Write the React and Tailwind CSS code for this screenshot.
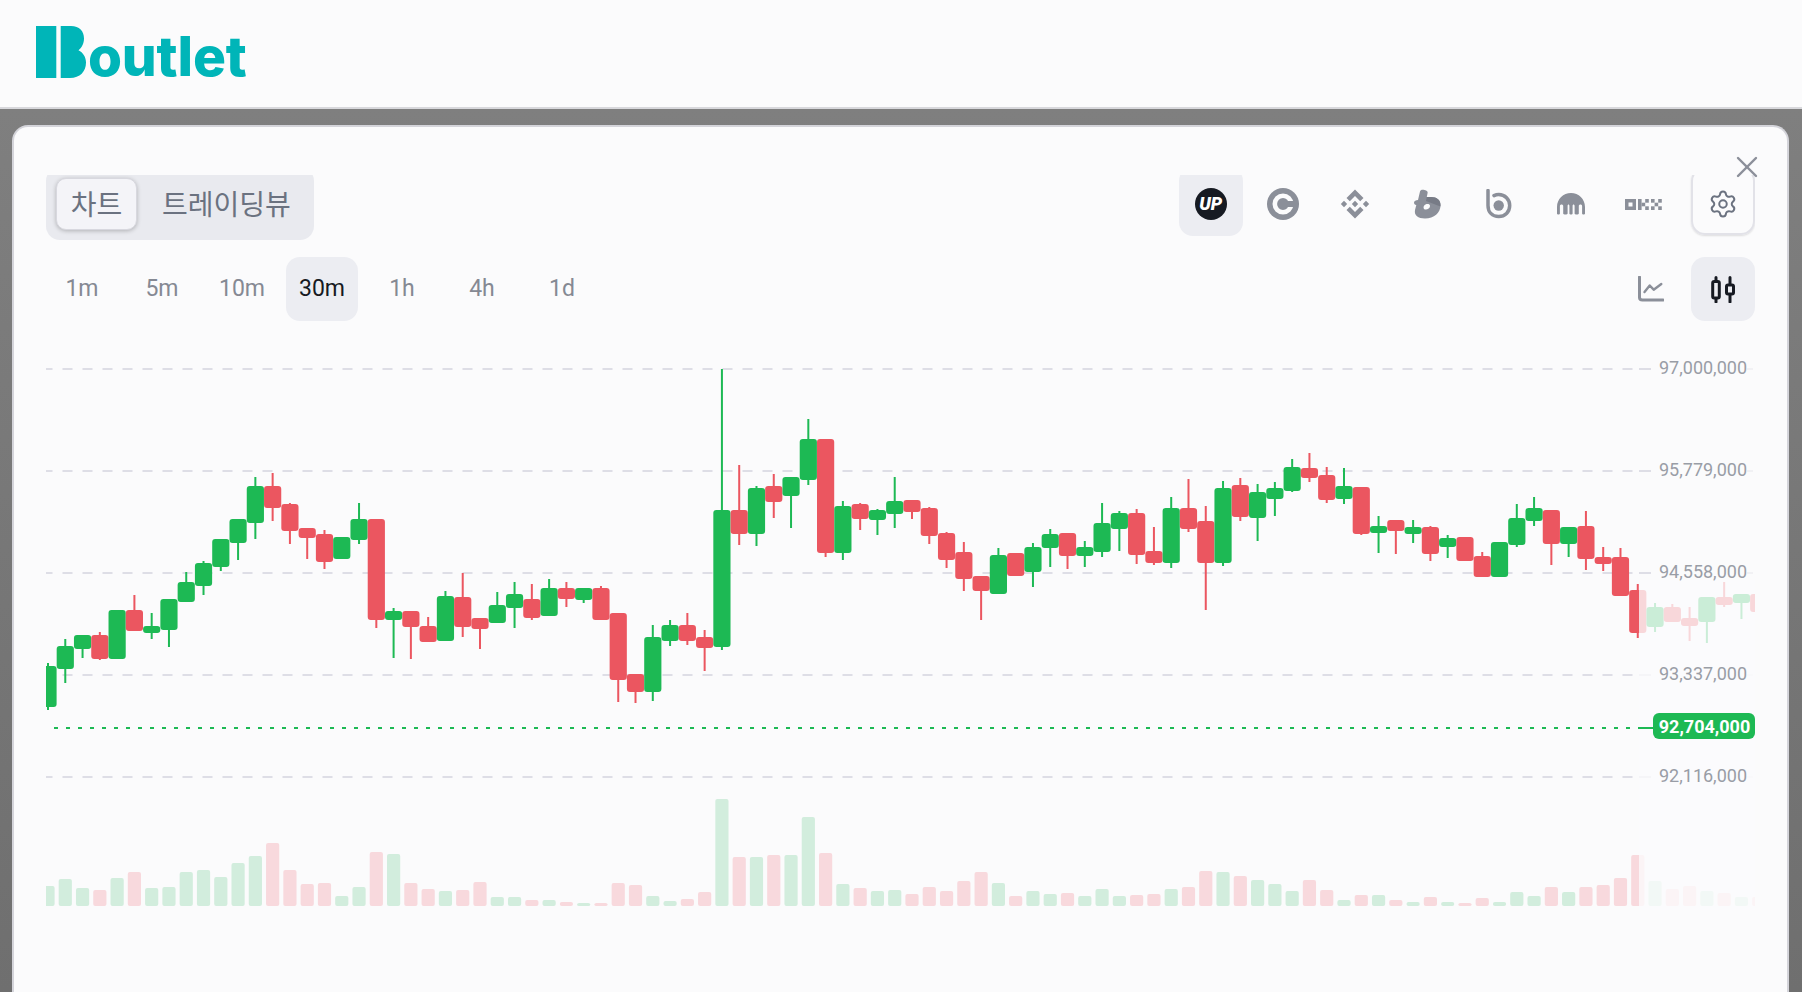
import { Settings, X } from 'lucide-react';

const UP = '#1db954';
const DOWN = '#eb5660';

const prices = [
  ['97,000,000', 369],
  ['95,779,000', 471],
  ['94,558,000', 573],
  ['93,337,000', 675],
  ['92,116,000', 777],
];

// type, wick top, body top, body bottom, wick bottom (page y)
const candles = [
  ['g', 663, 666, 707, 710], ['g', 639, 646, 669, 683], ['g', 635, 635, 649, 658], ['r', 632, 635, 659, 660],
  ['g', 610, 610, 659, 659], ['r', 595, 610, 631, 631], ['g', 613, 626, 633, 639], ['g', 599, 599, 630, 647],
  ['g', 572, 582, 602, 602], ['g', 561, 563, 586, 595], ['g', 539, 539, 567, 571], ['g', 519, 519, 543, 560],
  ['g', 477, 486, 523, 539], ['r', 473, 486, 508, 521], ['r', 503, 504, 531, 544], ['r', 528, 528, 538, 559],
  ['r', 530, 534, 562, 569], ['g', 537, 537, 559, 559], ['g', 503, 519, 540, 544], ['r', 519, 519, 620, 628],
  ['g', 608, 611, 620, 658], ['r', 611, 611, 627, 659], ['r', 617, 626, 642, 642], ['g', 591, 596, 641, 641],
  ['r', 573, 597, 627, 637], ['r', 618, 618, 629, 649], ['g', 592, 605, 623, 623], ['g', 582, 594, 608, 628],
  ['r', 584, 599, 618, 620], ['g', 579, 588, 616, 616], ['r', 582, 588, 599, 607], ['g', 588, 588, 600, 603],
  ['r', 586, 588, 620, 620], ['r', 613, 613, 680, 702], ['r', 674, 674, 692, 703], ['g', 625, 637, 692, 701],
  ['g', 620, 625, 641, 646], ['r', 613, 625, 641, 645], ['r', 630, 637, 648, 671], ['g', 369, 510, 647, 650],
  ['r', 465, 510, 534, 545], ['g', 486, 488, 534, 546], ['r', 474, 486, 502, 518], ['g', 477, 477, 496, 528],
  ['g', 419, 439, 480, 485], ['r', 439, 439, 553, 557], ['g', 501, 506, 553, 560], ['r', 503, 504, 519, 530],
  ['g', 509, 510, 520, 535], ['g', 477, 501, 514, 528], ['r', 500, 500, 512, 519], ['r', 507, 508, 536, 544],
  ['r', 532, 533, 560, 568], ['r', 542, 552, 579, 591], ['r', 576, 576, 591, 620], ['g', 548, 555, 594, 594],
  ['r', 553, 553, 576, 576], ['g', 543, 547, 572, 587], ['g', 529, 534, 548, 567], ['r', 533, 533, 556, 569],
  ['g', 541, 547, 556, 567], ['g', 503, 523, 552, 557], ['g', 511, 513, 529, 551], ['r', 509, 513, 555, 564],
  ['r', 527, 551, 563, 565], ['g', 497, 508, 563, 568], ['r', 479, 508, 529, 532], ['r', 506, 521, 563, 610],
  ['g', 481, 488, 563, 566], ['r', 478, 485, 517, 521], ['g', 484, 492, 518, 541], ['g', 482, 488, 499, 516],
  ['g', 459, 467, 491, 492], ['r', 453, 468, 478, 482], ['r', 467, 475, 500, 503], ['g', 468, 486, 499, 504],
  ['r', 487, 487, 534, 535], ['g', 516, 526, 533, 553], ['r', 520, 520, 531, 554], ['g', 520, 527, 534, 543],
  ['r', 526, 527, 554, 561], ['g', 535, 538, 547, 558], ['r', 537, 537, 561, 561], ['r', 552, 556, 577, 577],
  ['g', 542, 542, 577, 577], ['g', 504, 518, 545, 547], ['g', 497, 508, 521, 526], ['r', 510, 510, 544, 565],
  ['g', 527, 527, 544, 557], ['r', 511, 526, 559, 570], ['r', 547, 557, 564, 571], ['r', 548, 557, 596, 596],
  ['r', 584, 590, 633, 638], ['g', 603, 607, 627, 632], ['r', 604, 607, 622, 622], ['r', 607, 618, 626, 641],
  ['g', 597, 597, 622, 643], ['r', 582, 597, 605, 607], ['g', 594, 594, 603, 619], ['r', 594, 594, 612, 612],
];

// page y of each volume bar top
const volumes = [
  [886, 'g'], [879, 'g'], [888, 'g'], [890, 'r'], [878, 'g'], [872, 'r'], [888, 'g'], [887, 'g'], [872, 'g'], [870, 'g'],
  [877, 'g'], [863, 'g'], [856, 'g'], [843, 'r'], [870, 'r'], [884, 'r'], [883, 'r'], [896, 'g'], [887, 'g'], [852, 'r'],
  [854, 'g'], [883, 'r'], [889, 'r'], [891, 'g'], [890, 'r'], [882, 'r'], [897, 'g'], [897, 'g'], [900, 'r'], [900, 'g'],
  [902, 'r'], [903, 'g'], [903, 'r'], [883, 'r'], [885, 'r'], [896, 'g'], [901, 'g'], [899, 'r'], [892, 'r'], [799, 'g'],
  [857, 'r'], [857, 'g'], [855, 'r'], [855, 'g'], [817, 'g'], [853, 'r'], [884, 'g'], [888, 'r'], [891, 'g'], [890, 'g'],
  [894, 'r'], [887, 'r'], [891, 'r'], [881, 'r'], [872, 'r'], [883, 'g'], [896, 'r'], [891, 'g'], [894, 'g'], [893, 'r'],
  [896, 'g'], [889, 'g'], [896, 'g'], [895, 'r'], [894, 'r'], [889, 'g'], [887, 'r'], [871, 'r'], [872, 'g'], [876, 'r'],
  [880, 'g'], [884, 'g'], [891, 'g'], [880, 'r'], [890, 'r'], [900, 'g'], [895, 'r'], [895, 'g'], [900, 'r'], [902, 'g'],
  [897, 'r'], [902, 'g'], [903, 'r'], [898, 'r'], [902, 'g'], [892, 'g'], [896, 'g'], [887, 'r'], [892, 'g'], [887, 'r'],
  [885, 'r'], [878, 'r'], [855, 'r'], [881, 'g'], [889, 'r'], [886, 'r'], [891, 'g'], [893, 'r'], [897, 'g'], [897, 'r'],
];

const candleX = (i) => 48 + 17.28 * i;

function Chart() {
  return (
    <svg width="1709" height="637" viewBox="46 355 1709 637" className="block shrink-0">
      <defs>
        <clipPath id="plot">
          <rect x="46" y="355" width="1709" height="637" />
        </clipPath>
      </defs>
      {prices.map(([, y]) => (
        <g key={y}>
          <line x1="46" x2="1639" y1={y} y2={y} stroke="#dedee6" strokeWidth="2" strokeDasharray="10 10" strokeDashoffset="-16.5" />
          <line x1="1639" x2="1651" y1={y} y2={y} stroke="#dedee6" strokeWidth="2" />
          <line x1="1747" x2="1753" y1={y} y2={y} stroke="#f1f1f4" strokeWidth="2" />
        </g>
      ))}
      <g clipPath="url(#plot)">
        {volumes.map(([top, type], i) => (
          <rect
            key={i}
            x={candleX(i) - 6.6}
            y={top}
            width="13.2"
            height={906 - top}
            rx="2"
            fill={type === 'g' ? '#d2eddd' : '#f8d9dd'}
          />
        ))}
        {candles.map(([type, wickTop, bodyTop, bodyBottom, wickBottom], i) => {
          const color = type === 'g' ? UP : DOWN;
          const x = candleX(i);
          return (
            <g key={i} fill={color}>
              <rect x={x - 1} y={wickTop} width="2" height={wickBottom - wickTop} />
              <rect x={x - 8.6} y={bodyTop} width="17.2" height={bodyBottom - bodyTop} rx="3" />
            </g>
          );
        })}
        <rect x="1639" y="580" width="116" height="330" fill="#fbfbfc" fillOpacity="0.78" />
      </g>
      <line x1="54" x2="1640" y1="728" y2="728" stroke={UP} strokeWidth="2" strokeDasharray="4 8" />
      <line x1="1639" x2="1655" y1="728" y2="728" stroke={UP} strokeWidth="2" />
      <rect x="1653" y="713" width="102" height="26" rx="6" fill={UP} />
      <text x="1704.5" y="726" textAnchor="middle" dominantBaseline="central" fill="#fff" fontFamily="Roboto, sans-serif" fontSize="18" fontWeight="700">
        92,704,000
      </text>
      {prices.map(([label, y]) => (
        <text key={label} x="1747" y={y - 2} textAnchor="end" dominantBaseline="central" fill="#999da6" fontFamily="Roboto, sans-serif" fontSize="18">
          {label}
        </text>
      ))}
    </svg>
  );
}

function Logo() {
  return (
    <div className="flex items-end h-[52px] text-[#00b5b8]">
      <svg width="50" height="52" viewBox="0 0 50 52" className="block shrink-0" fill="currentColor">
        <rect x="0" y="0" width="20.3" height="52" />
        <path d="M24.7 0H35C43.5 0 48 5.2 48 12.5C48 18 45.4 21.8 42.5 24.2C47 26.5 50 31 50 36.5C50 45.5 44 52 34 52H24.7Z" />
      </svg>
      <span className="ml-[2px] -mb-[4px] text-[55px] leading-[52px] font-extrabold tracking-[-0.2px] font-['Inter',sans-serif]">outlet</span>
    </div>
  );
}

function UpbitIcon() {
  return (
    <svg width="32" height="32" viewBox="0 0 32 32">
      <circle cx="16" cy="16" r="16" fill="#161a22" />
      <text x="15.7" y="21.8" textAnchor="middle" fill="#fff" fontFamily="Roboto, sans-serif" fontSize="18" fontWeight="900" fontStyle="italic">UP</text>
    </svg>
  );
}

function CivicIcon() {
  return (
    <svg width="32" height="32" viewBox="0 0 32 32">
      <circle cx="16" cy="16" r="16" fill="#8b8f99" />
      <circle cx="16" cy="16" r="8.2" fill="none" stroke="#fbfbfc" strokeWidth="4.6" />
      <rect x="16" y="13" width="12" height="6" fill="#8b8f99" />
    </svg>
  );
}

function BinanceIcon() {
  return (
    <svg width="30" height="30" viewBox="0 0 30 30" fill="#8b8f99">
      <path d="M15 0.5L23.5 9L20.2 12.2L15 7L9.8 12.2L6.5 9Z" />
      <path d="M15 29.5L23.5 21L20.2 17.8L15 23L9.8 17.8L6.5 21Z" />
      <path d="M15 11.8L18.2 15L15 18.2L11.8 15Z" />
      <path d="M4 11.8L7.2 15L4 18.2L0.8 15Z" />
      <path d="M26 11.8L29.2 15L26 18.2L22.8 15Z" />
    </svg>
  );
}

function BithumbIcon() {
  return (
    <svg width="28" height="30" viewBox="0 0 28 30">
      <path d="M1 13.5C1 12 3 11 5 11L7 2.5C7.4 1 9 0.5 11.5 1C14 1.5 15 2.5 14.6 4L13.8 8H18C24 8 27.5 11 27.5 16C27.5 24 21 29.5 12 29.5C5 29.5 1 26.5 2 21L3.3 16C1.8 15.8 1 15 1 13.5Z" fill="#8b8f99" />
      <path d="M13.8 8H18C24 8 27.5 11 27.5 16C27.5 16.5 27.5 17 27.4 17.4L13 12Z" fill="#777b86" />
      <path d="M12.5 15.5C14.5 14.5 17 15 17 17C17 19.5 14 21 12 20.5C10 20 10 16.8 12.5 15.5Z" fill="#fbfbfc" />
    </svg>
  );
}

function BitgetIcon() {
  return (
    <svg width="26" height="30" viewBox="0 0 26 30" fill="none">
      <path d="M2 1.5V16.5C2 23.5 6.5 27.5 12.7 27.5C19 27.5 23.7 23 23.7 16.5C23.7 10.5 19 5.5 12.7 5.5C11 5.5 9.5 5.9 8 6.6" stroke="#8b8f99" strokeWidth="3.5" strokeLinecap="round" />
      <circle cx="12.7" cy="16.5" r="5.2" fill="#8b8f99" />
    </svg>
  );
}

function KrakenIcon() {
  return (
    <svg width="28" height="23" viewBox="0 0 28 23" fill="#8b8f99">
      <path d="M14 0C6.3 0 0 6 0 14V20.5C0 21.9 2.9 21.9 2.9 20.5V13C2.9 11 6.2 11 6.2 13V20.5C6.2 21.9 10.6 21.9 10.6 20.5V13C10.6 11 12.4 11 12.4 13V20.5C12.4 21.9 15.6 21.9 15.6 20.5V13C15.6 11 17.6 11 17.6 13V20.5C17.6 21.9 21.8 21.9 21.8 20.5V13C21.8 11 25.1 11 25.1 13V20.5C25.1 21.9 28 21.9 28 20.5V14C28 6 21.7 0 14 0Z" />
    </svg>
  );
}

function OkxIcon() {
  return (
    <svg width="37" height="11" viewBox="0 0 37 11" fill="#8b8f99">
      <path fillRule="evenodd" d="M0 0H11V11H0ZM3.5 3.5V7.5H7.5V3.5Z" />
      <rect x="13" y="0" width="3.6" height="11" />
      <rect x="16.6" y="3.7" width="3.6" height="3.6" />
      <rect x="20.2" y="0" width="3.6" height="3.7" />
      <rect x="20.2" y="7.3" width="3.6" height="3.7" />
      <rect x="26" y="0" width="3.6" height="3.7" />
      <rect x="26" y="7.3" width="3.6" height="3.7" />
      <rect x="29.6" y="3.7" width="3.6" height="3.6" />
      <rect x="33.2" y="0" width="3.6" height="3.7" />
      <rect x="33.2" y="7.3" width="3.6" height="3.7" />
    </svg>
  );
}

function LineChartIcon() {
  return (
    <svg width="26" height="26" viewBox="0 0 26 26" fill="none" stroke="#8b8f99" strokeLinecap="round" strokeLinejoin="round">
      <path d="M1.5 1V21.5C1.5 23.5 2.5 24 4.5 24H25" strokeWidth="3" />
      <path d="M6.5 16L11.7 9.5L15.7 13.7L23.3 8" strokeWidth="2.4" />
    </svg>
  );
}

function CandleIcon() {
  return (
    <svg width="24" height="27" viewBox="0 0 24 27" fill="none" stroke="#161a22" strokeWidth="3" strokeLinecap="round">
      <rect x="1.7" y="5.5" width="6.6" height="16.5" rx="1.5" />
      <path d="M5 1.5V5M5 22.5V26" />
      <rect x="15.5" y="9" width="7" height="9" rx="1.5" />
      <path d="M19 1.5V8.5M19 18.5V26" />
    </svg>
  );
}

const exchanges = [UpbitIcon, CivicIcon, BinanceIcon, BithumbIcon, BitgetIcon, KrakenIcon, OkxIcon];
const intervals = ['1m', '5m', '10m', '30m', '1h', '4h', '1d'];

export default function App() {
  return (
    <div className="h-[992px] overflow-hidden flex flex-col bg-linear-to-b from-[#818181] to-[#6f6f6f] font-['Inter',sans-serif]">
      <header className="h-[109px] shrink-0 bg-[#fbfbfc] border-b-2 border-[#d8d8dc] pt-[26px] pl-[36px]">
        <Logo />
      </header>

      <main className="relative mt-[16px] ml-[12px] mr-[13px] flex-1 min-h-0 bg-[#fbfbfc] border-2 border-b-0 border-[#d4d4da] rounded-t-[16px] pt-[48px] pl-[32px] pr-[32px]">
        <button className="absolute z-10 top-[22px] right-[22px] text-[#8b8f99]">
          <X size={36} strokeWidth={1.6} />
        </button>

        <div className="h-[65px] overflow-hidden flex items-start justify-between">
          <div className="-mt-[8px] h-[73px] w-[268px] rounded-[14px] bg-[#e9eaef] flex items-start pl-[10px] pt-[11px] text-[28px] text-[#6b7280] font-['Noto_Sans_CJK_KR',sans-serif]">
            <div className="h-[52px] w-[81px] pb-[2px] rounded-[10px] bg-[#f4f4f8] border border-[#d8d8df] shadow-[0_1px_4px_rgba(0,0,0,0.25)] flex items-center justify-center">
              차트
            </div>
            <div className="ml-[25px] h-[52px] pb-[2px] flex items-center">트레이딩뷰</div>
          </div>
          <div className="-mt-[8px] flex gap-[8px]">
            {exchanges.map((Icon, i) => (
              <div key={i} className={`w-[64px] h-[69px] pt-[8px] pb-[3px] rounded-[14px] flex items-center justify-center ${i === 0 ? 'bg-[#ecedf2]' : ''}`}>
                <Icon />
              </div>
            ))}
            <div className="ml-[8px] w-[64px] h-[68px] pt-[8px] pb-[2px] rounded-[14px] border-2 border-[#e2e2e8] shadow-[0_1px_2px_rgba(0,0,0,0.12)] flex items-center justify-center text-[#6b7280]">
              <Settings size={30} strokeWidth={1.6} />
            </div>
          </div>
        </div>

        <div className="mt-[17px] flex items-center justify-between">
          <div className="flex gap-[8px] font-['Roboto',sans-serif]">
            {intervals.map((label) => (
              <div
                key={label}
                className={`w-[72px] h-[64px] pt-[1px] rounded-[14px] flex items-center justify-center text-[23px] font-normal ${label === '30m' ? 'bg-[#ecedf2] text-[#161a22]' : 'text-[#858993]'}`}
              >
                {label}
              </div>
            ))}
          </div>
          <div className="flex gap-[8px]">
            <div className="w-[64px] h-[64px] flex items-center justify-center"><LineChartIcon /></div>
            <div className="w-[64px] h-[64px] rounded-[14px] bg-[#ecedf2] flex items-center justify-center"><CandleIcon /></div>
          </div>
        </div>

        <div className="mt-[34px]">
          <Chart />
        </div>
      </main>
    </div>
  );
}
